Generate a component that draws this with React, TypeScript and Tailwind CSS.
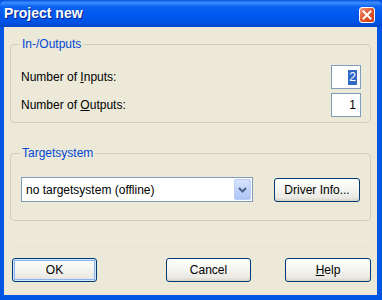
import { ReactNode } from 'react';

const FONT = "font-['Liberation_Sans',Arial,sans-serif]";

function GroupBox({ label, className, children }: { label: string; className: string; children: ReactNode }) {
    return (
        <div className={`relative rounded-[4px] border border-[#D0D0BF] ${className}`}>
            {/* caption sits over the top border */}
            <span className="absolute -top-[9px] left-[9px] bg-[#ECE9D8] px-[2px] text-[12px] leading-[16px] text-[#0046D5]">
                {label}
            </span>
            {children}
        </div>
    );
}

function XpButton({ children, isDefault, className }: { children: ReactNode; isDefault?: boolean; className: string }) {
    return (
        <button
            className={`flex h-[24px] items-center justify-center rounded-[3px] border border-[#003C74] bg-[linear-gradient(to_bottom,#FFFFFF_0%,#F6F6F3_40%,#EAE9E3_85%,#D6D0C5_100%)] text-[12px] text-black ${isDefault ? 'shadow-[inset_0_0_0_1px_#CEE7FF,inset_0_0_0_2px_#8CB3F0]' : ''} ${className}`}
        >
            {children}
        </button>
    );
}

export default function App() {
    return (
        <div className={`flex h-[300px] w-[382px] flex-col bg-[#0055E5] ${FONT}`}>
            {/* Title bar */}
            <div className="flex h-[27px] shrink-0 items-center justify-between rounded-t-[6px] bg-[linear-gradient(to_bottom,#0050E0_0%,#3D8EFF_10%,#0A62F0_25%,#0058EE_55%,#0052E2_85%,#0046C8_100%)] pl-[4px] pr-[7px]">
                <span className="text-[14px] font-bold text-white [text-shadow:1px_1px_0_#0A1E8A]">Project new</span>
                <div className="mt-[3px] flex h-[16px] w-[16px] items-center justify-center rounded-[3px] border border-white bg-[linear-gradient(135deg,#F29C7C_0%,#E3592E_45%,#C63A14_100%)]">
                    <svg width="10" height="10" viewBox="0 0 10 10">
                        <path d="M1.5 1.5 L8.5 8.5 M8.5 1.5 L1.5 8.5" stroke="white" strokeWidth="2" strokeLinecap="square" />
                    </svg>
                </div>
            </div>

            {/* Client area */}
            <div className="ml-[4px] mr-[5px] mb-[5px] flex flex-1 flex-col bg-[#ECE9D8] px-[6px]">
                <GroupBox label="In-/Outputs" className="mt-[17px] h-[79px] pt-[20px] pl-[10px] pr-[9px]">
                    <div className="flex flex-col gap-[4px] text-[12px] text-black">
                        <div className="flex h-[24px] items-center justify-between">
                            <span>Number of <span className="underline">I</span>nputs:</span>
                            <div className="flex h-[24px] w-[30px] items-center justify-end border border-[#7F9DB9] bg-white pr-[3px]">
                                <span className="bg-[#316AC5] px-[1px] leading-[15px] text-white">2</span>
                            </div>
                        </div>
                        <div className="flex h-[24px] items-center justify-between">
                            <span>Number of <span className="underline">O</span>utputs:</span>
                            <div className="flex h-[24px] w-[30px] items-center justify-end border border-[#7F9DB9] bg-white pr-[4px]">
                                <span>1</span>
                            </div>
                        </div>
                    </div>
                </GroupBox>

                <GroupBox label="Targetsystem" className="mt-[30px] h-[68px] pt-[23px] pl-[10px] pr-[10px]">
                    <div className="flex items-start justify-between">
                        <div className="flex h-[25px] w-[232px] items-center justify-between border border-[#7F9DB9] bg-white pl-[4px] pr-[1px] text-[12px]">
                            <span>no targetsystem (offline)</span>
                            <div className="flex h-[21px] w-[17px] items-center justify-center rounded-[2px] border border-[#BCCDF5] bg-[linear-gradient(to_bottom,#D7E3FD_0%,#C1D3FB_50%,#AFC5F6_100%)]">
                                <svg width="9" height="6" viewBox="0 0 9 6">
                                    <path d="M1 1 L4.5 4.5 L8 1" fill="none" stroke="#4D6185" strokeWidth="2" />
                                </svg>
                            </div>
                        </div>
                        <XpButton className="mt-[1px] w-[86px]">Driver Info...</XpButton>
                    </div>
                </GroupBox>

                {/* faint separator */}
                <div className="mt-[22px] h-[4px] rounded-b-[4px] border-x border-b border-[#E7E4D3]" />

                <div className="mt-[11px] flex pl-[2px]">
                    <XpButton isDefault className="w-[85px]">OK</XpButton>
                    <XpButton className="ml-[69px] w-[85px]">Cancel</XpButton>
                    <XpButton className="ml-[34px] w-[86px]">
                        <span className="underline">H</span>elp
                    </XpButton>
                </div>
            </div>
        </div>
    );
}
